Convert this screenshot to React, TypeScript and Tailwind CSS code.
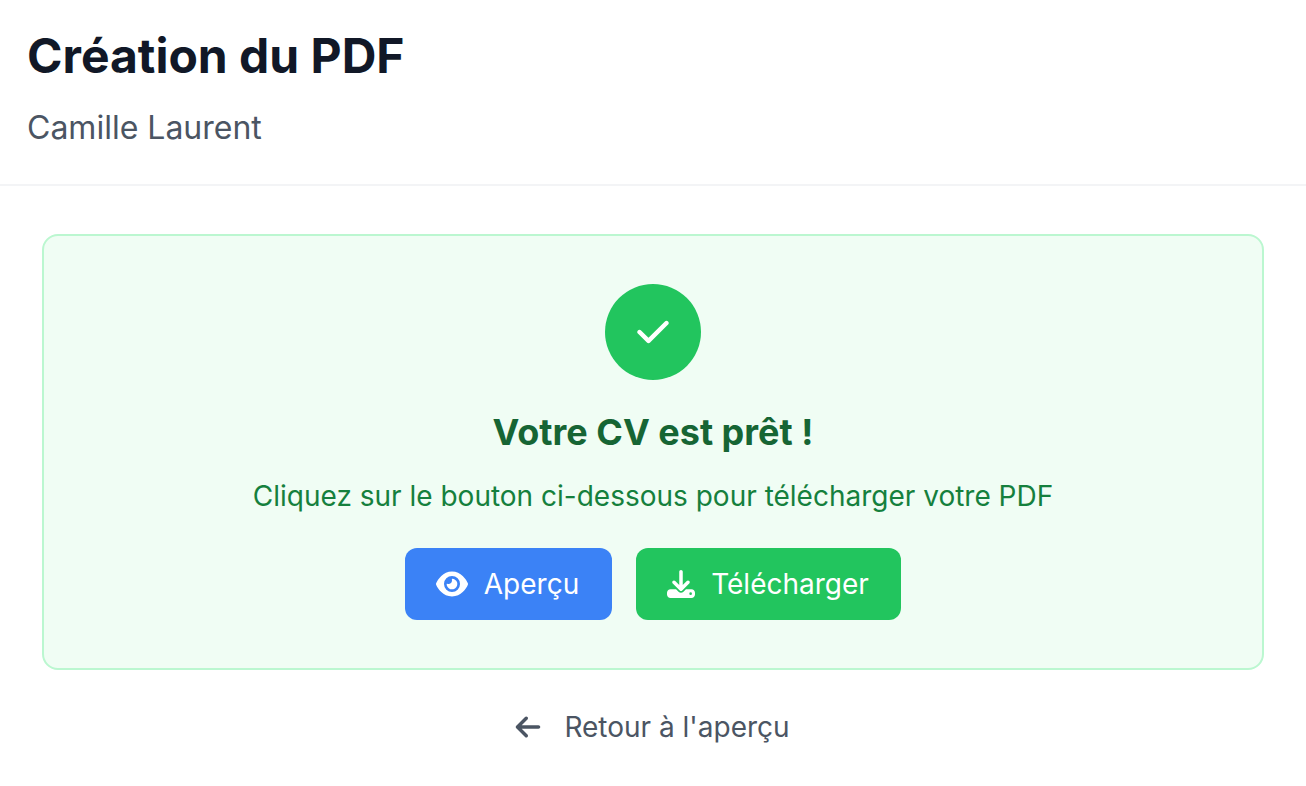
import { FaArrowLeft, FaCheck, FaDownload, FaEye } from "react-icons/fa6";

export default function App() {
  return (
    <div className="min-h-[786px] bg-white font-['Inter',sans-serif]">
      <header className="h-[186px] border-b-2 border-gray-100 px-[27px] pt-[24px]">
        <h1 className="text-[48px] leading-[64px] font-bold text-[#111827]">Création du PDF</h1>
        <p className="mt-[16px] text-[32px] leading-[48px] text-[#4b5563]">Camille Laurent</p>
      </header>

      <main className="px-[42px] pt-[48px]">
        <div className="h-[436px] rounded-[16px] border-2 border-[#bbf7d0] bg-[#f0fdf4] pt-[48px] flex flex-col items-center">
          <div className="w-[96px] h-[96px] rounded-full bg-[#22c55e] flex items-center justify-center text-white">
            <FaCheck size={36} />
          </div>
          <h2 className="mt-[24px] text-[36px] leading-[56px] font-bold text-[#166534]">Votre CV est prêt !</h2>
          <p className="mt-[16px] text-[28px] leading-[40px] text-[#15803d]">
            Cliquez sur le bouton ci-dessous pour télécharger votre PDF
          </p>
          <div className="mt-[32px] flex gap-[24px]">
            <button className="h-[72px] w-[207px] pr-[2px] rounded-[12px] bg-[#3b82f6] text-white text-[28px] flex items-center justify-center gap-[16px]">
              <FaEye size={32} />
              Aperçu
            </button>
            <button className="h-[72px] w-[265px] pr-[1px] rounded-[12px] bg-[#22c55e] text-white text-[28px] flex items-center justify-center gap-[16px]">
              <FaDownload size={28} />
              Télécharger
            </button>
          </div>
        </div>

        <div className="mt-[36px] pr-[2px] flex items-center justify-center gap-[22px] text-[#4b5563] text-[28px]">
          <FaArrowLeft size={28} />
          <span>Retour à l'aperçu</span>
        </div>
      </main>
    </div>
  );
}
